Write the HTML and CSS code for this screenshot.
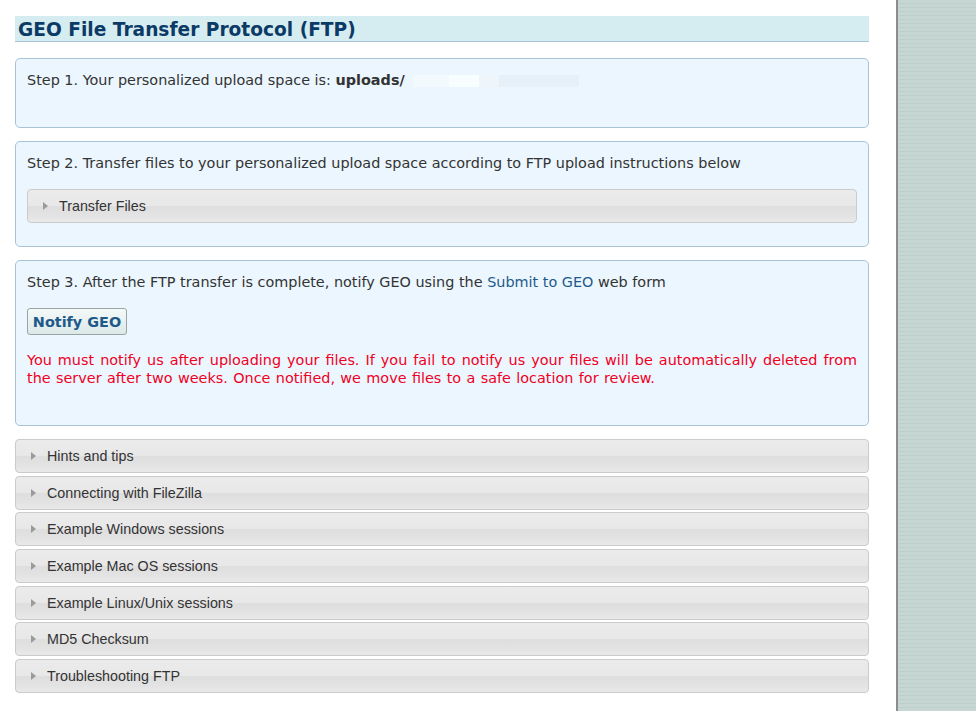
FILE: index.html
```html
<!DOCTYPE html>
<html>
<head>
<meta charset="utf-8">
<title>GEO File Transfer Protocol (FTP)</title>
<link rel="stylesheet" href="styles.css">
</head>
<body>
<div class="page">
  <main class="main">
    <h1 class="title">GEO File Transfer Protocol (FTP)</h1>

    <section class="step step-1">
      <p class="step-text">Step 1. Your personalized upload space is: <b>uploads/</b><span class="redact"><span class="r1"></span><span class="r2"></span><span class="r3"></span><span class="r4"></span></span></p>
    </section>

    <section class="step step-2">
      <p class="step-text">Step 2. Transfer files to your personalized upload space according to FTP upload instructions below</p>
      <div class="acc acc-inner"><span class="tri"></span>Transfer Files</div>
    </section>

    <section class="step step-3">
      <p class="step-text">Step 3. After the FTP transfer is complete, notify GEO using the <a class="link" href="#">Submit to GEO</a> web form</p>
      <button class="notify" type="button">Notify GEO</button>
      <p class="warn">You must notify us after uploading your files. If you fail to notify us your files will be automatically deleted from the server after two weeks. Once notified, we move files to a safe location for review.</p>
    </section>

    <div class="acc-list">
      <div class="acc"><span class="tri"></span>Hints and tips</div>
      <div class="acc"><span class="tri"></span>Connecting with FileZilla</div>
      <div class="acc"><span class="tri"></span>Example Windows sessions</div>
      <div class="acc"><span class="tri"></span>Example Mac OS sessions</div>
      <div class="acc"><span class="tri"></span>Example Linux/Unix sessions</div>
      <div class="acc"><span class="tri"></span>MD5 Checksum</div>
      <div class="acc"><span class="tri"></span>Troubleshooting FTP</div>
    </div>
  </main>
  <aside class="sidebar"></aside>
</div>
</body>
</html>
```

FILE: styles.css
```css
html, body {
  margin: 0;
  padding: 0;
  background: #fff;
}

.page {
  display: flex;
  min-height: 711px;
}

.main {
  width: 854px;
  padding: 16px 27px 0 15px;
  font-family: "DejaVu Sans", Verdana, sans-serif;
  color: #333;
}

.sidebar {
  flex: 1;
  border-left: 2px solid #8c8c8c;
  background-color: #c6d6d3;
  background-image: repeating-linear-gradient(to bottom, #c6d6d3 0, #c6d6d3 3px, #bfcfcc 3px, #bfcfcc 4px);
}

.title {
  margin: 0 0 16px;
  height: 25px;
  padding: 0 0 0 3px;
  background: #d5ecf0;
  border-bottom: 1px solid #a9c3d6;
  color: #0b3a66;
  font-size: 18.6px;
  font-weight: bold;
  line-height: 27px;
}

.step {
  background: #ebf6fe;
  border: 1px solid #a9c3d6;
  border-radius: 5px;
  padding: 12px 11px 0;
  margin-bottom: 13px;
}

.step-1 { height: 56px; }
.step-2 { height: 92px; }
.step-3 { height: 152px; }

.step-text {
  margin: 0;
  font-size: 14.4px;
  line-height: 18px;
  color: #333;
}

.step-text b { color: #333; }

.redact {
  display: inline-flex;
  vertical-align: middle;
  gap: 0;
  margin-left: 8px;
}
.redact span { display: inline-block; height: 12px; }
.r1 { width: 36px; background: #f3fafe; }
.r2 { width: 30px; background: #f8fdff; }
.r3 { width: 20px; background: #eef6fc; }
.r4 { width: 80px; background: #e6f0f8; }

.link {
  color: #1f5a8c;
  text-decoration: none;
}

.notify {
  display: block;
  margin: 17px 0 0;
  width: 100px;
  height: 27px;
  padding: 0;
  border: 1px solid #9aa4a4;
  border-radius: 3px;
  background: linear-gradient(to bottom, #f4f9f9 0%, #dce9e9 100%);
  color: #1d5a8a;
  font-family: "DejaVu Sans", Verdana, sans-serif;
  font-size: 14.4px;
  font-weight: bold;
}

.warn {
  margin: 16px 0 0;
  color: #f0001e;
  font-size: 14.4px;
  line-height: 18px;
  text-align: justify;
  word-spacing: 0.8px;
}

.acc {
  box-sizing: border-box;
  height: 34px;
  display: flex;
  align-items: center;
  padding-left: 15px;
  border: 1px solid #cbcbcb;
  border-radius: 4px;
  background: linear-gradient(to bottom, #ebebeb 0%, #e8e8e8 48%, #dedede 52%, #e3e3e3 80%, #e9e9e9 100%);
  font-family: "Liberation Sans", Arial, sans-serif;
  font-size: 14.3px;
  color: #333;
}

.acc-inner {
  margin-top: 17px;
}

.acc-list .acc {
  margin-bottom: 2.67px;
}

.tri {
  width: 0;
  height: 0;
  border-top: 4px solid transparent;
  border-bottom: 4px solid transparent;
  border-left: 5px solid #9a9a9a;
  margin-right: 11px;
}
```
